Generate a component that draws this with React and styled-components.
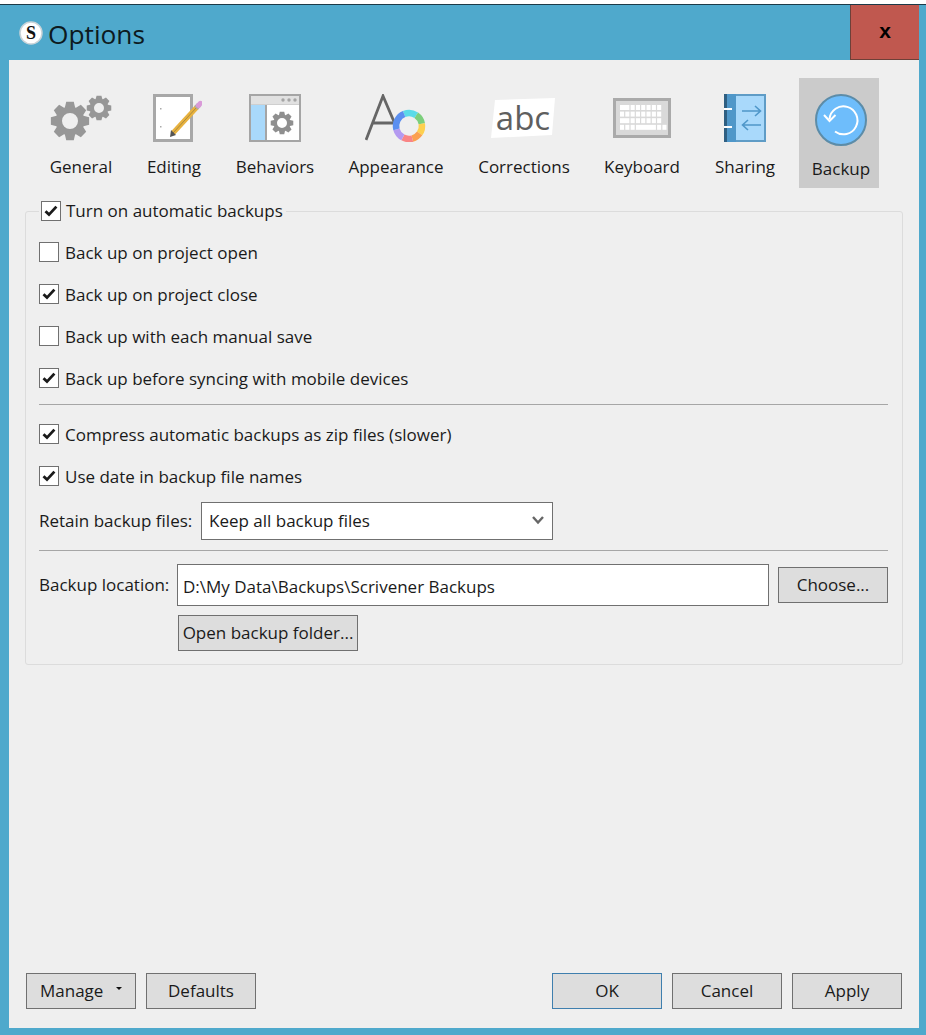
import styled, { createGlobalStyle } from "styled-components";

const GlobalStyle = createGlobalStyle`
  html, body {
    margin: 0;
    padding: 0;
    background: #ffffff;
  }
  body {
    font-family: "Open Sans", "Noto Sans", sans-serif;
    font-size: 17px;
    color: #1a1a1a;
  }
`;

const Frame = styled.div`
  box-sizing: border-box;
  width: 926px;
  height: 1031px;
  margin-top: 4px;
  padding: 0 7px 7px 9px;
  background: #4fa9cc;
  border-top: 1px solid #1c3a48;
  display: flex;
  flex-direction: column;
`;

const TitleBar = styled.div`
  height: 55px;
  flex: none;
  display: flex;
  align-items: center;
  justify-content: space-between;
`;

const TitleGroup = styled.div`
  display: flex;
  align-items: center;
  gap: 5px;
  padding-left: 10px;
`;

const Title = styled.div`
  font-size: 26.3px;
  color: #0d1a20;
  line-height: 55px;
  padding-top: 3px;
`;

const CloseButton = styled.div`
  box-sizing: border-box;
  width: 69px;
  height: 55px;
  background: #c0584f;
  border-left: 1px solid #6e4038;
  border-bottom: 1px solid #6e4038;
  display: flex;
  align-items: center;
  justify-content: center;
  padding-bottom: 2px;
  font-family: "Liberation Sans", sans-serif;
  font-weight: 700;
  font-size: 21px;
  color: #000000;
`;

const Content = styled.div`
  flex: 1;
  background: #efefef;
  display: flex;
  flex-direction: column;
  padding: 18px 16px 19px;
`;

const Tabs = styled.div`
  display: flex;
  padding-left: 8px;
`;

const Tab = styled.div`
  box-sizing: border-box;
  height: 110px;
  width: ${(p) => p.$width}px;
  margin-left: ${(p) => (p.$selected ? 6 : 0)}px;
  flex: none;
  display: flex;
  flex-direction: column;
  align-items: center;
  padding-top: 16px;
  padding-left: ${(p) => (p.$selected ? 4 : 0)}px;
  background: ${(p) => (p.$selected ? "#cbcbcb" : "transparent")};
`;

const TabIcon = styled.svg`
  display: block;
  flex: none;
`;

const TabLabel = styled.div`
  margin-top: ${(p) => (p.$selected ? 11 : 13)}px;
  line-height: 24px;
  white-space: nowrap;
`;

const Group = styled.fieldset`
  margin: 13px 0 0;
  padding: 0 14px 13px 13px;
  min-width: 0;
  border: 1px solid #dcdcdc;
  border-radius: 3px;
`;

const GroupLegend = styled.legend`
  padding: 0 3px 0 2px;
  display: flex;
  align-items: center;
  gap: 5px;
  height: 20px;
`;

const LegendText = styled.span`
  padding-bottom: 2px;
`;

const CheckList = styled.div`
  display: flex;
  flex-direction: column;
  gap: 22px;
  margin-top: ${(p) => p.$top}px;
`;

const CheckRow = styled.div`
  display: flex;
  align-items: center;
  gap: 6px;
  height: 20px;
  white-space: nowrap;
`;

const Box = styled.span`
  box-sizing: border-box;
  width: 20px;
  height: 20px;
  flex: none;
  background: #ffffff;
  border: 1px solid #707070;
  display: flex;
  align-items: center;
  justify-content: center;
`;

const Divider = styled.div`
  height: 1px;
  background: #a6a6a6;
  margin-top: ${(p) => p.$top}px;
`;

const FormRow = styled.div`
  display: flex;
  align-items: center;
  margin-top: ${(p) => p.$top}px;
`;

const FormLabel = styled.div`
  width: ${(p) => p.$width}px;
  flex: none;
  padding-bottom: 2px;
  white-space: nowrap;
`;

const Dropdown = styled.div`
  box-sizing: border-box;
  width: 352px;
  height: 38px;
  background: #ffffff;
  border: 1px solid #707070;
  display: flex;
  align-items: center;
  justify-content: space-between;
  padding: 0 7px 2px 7px;
`;

const PathField = styled.div`
  box-sizing: border-box;
  flex: 1;
  height: 42px;
  margin-right: 9px;
  background: #ffffff;
  border: 1px solid #707070;
  display: flex;
  align-items: center;
  padding: 2px 0 0 5px;
`;

const Button = styled.div`
  box-sizing: border-box;
  width: ${(p) => p.$width || 110}px;
  height: 36px;
  flex: none;
  background: #dddddd;
  border: 1px solid ${(p) => (p.$primary ? "#3f7fae" : "#707070")};
  display: flex;
  align-items: center;
  justify-content: ${(p) => (p.$menu ? "flex-start" : "center")};
  padding-left: ${(p) => (p.$menu ? 13 : 0)}px;
  padding-bottom: 2px;
  white-space: nowrap;
`;

const MenuCaret = styled.span`
  margin-left: 13px;
  margin-bottom: 3px;
  width: 0;
  height: 0;
  border-left: 3px solid transparent;
  border-right: 3px solid transparent;
  border-top: 3px solid #111111;
`;

const OpenButton = styled(Button)`
  margin-top: 9px;
  margin-left: 139px;
`;

const Footer = styled.div`
  margin-top: auto;
  padding: 0 1px;
  display: flex;
  justify-content: space-between;
`;

const ButtonGroup = styled.div`
  display: flex;
  gap: 10px;
`;

// builds a cog outline with a round hole, used by the General and Behaviors icons
const gearPath = (cx, cy, outer, inner, hole, teeth) => {
  const pts = [];
  const step = (Math.PI * 2) / teeth;
  for (let i = 0; i < teeth; i++) {
    const a = i * step - Math.PI / 2;
    [
      [-0.5, inner],
      [-0.27, outer],
      [0.27, outer],
      [0.5, inner],
    ].forEach(([t, r]) => {
      const b = a + t * step * 0.92;
      pts.push(`${(cx + Math.cos(b) * r).toFixed(2)} ${(cy + Math.sin(b) * r).toFixed(2)}`);
    });
  }
  return `M${pts.join("L")}Z M${cx - hole} ${cy}a${hole} ${hole} 0 1 0 ${hole * 2} 0a${hole} ${hole} 0 1 0 ${-hole * 2} 0Z`;
};

const Logo = () => (
  <svg width="24" height="24" viewBox="0 0 24 24">
    <circle cx="12" cy="12" r="11" fill="#ffffff" stroke="#c9d3d8" strokeWidth="1.5" />
    <text x="12" y="18" textAnchor="middle" fontFamily="Liberation Serif, serif" fontWeight="700" fontSize="18" fill="#111">
      S
    </text>
  </svg>
);

const CheckMark = () => (
  <svg width="14" height="12" viewBox="0 0 14 12">
    <path d="M1.5 6.2 5 9.6 12.4 1.6" fill="none" stroke="#1a1a1a" strokeWidth="2.8" />
  </svg>
);

const GeneralIcon = () => (
  <TabIcon width="64" height="48" viewBox="0 0 64 48">
    <path fillRule="evenodd" fill="#979797" d={gearPath(21, 27, 19.5, 14.5, 8, 8)} />
    <path fillRule="evenodd" fill="#979797" d={gearPath(50, 14, 12.5, 9.5, 5, 8)} />
  </TabIcon>
);

const EditingIcon = () => (
  <TabIcon width="56" height="48" viewBox="-7 0 56 48">
    <rect x="1.5" y="1.5" width="37" height="45" fill="#ffffff" stroke="#a8a8a8" strokeWidth="3" />
    <rect x="7" y="14" width="1.5" height="1.5" fill="#aaa" />
    <rect x="7" y="32" width="1.5" height="1.5" fill="#aaa" />
    <path d="M20 39 44 13" stroke="#e8b23f" strokeWidth="5" fill="none" />
    <path d="M20 39 44 13" stroke="#8f7a3c" strokeWidth="0.7" fill="none" />
    <path d="M43 14 46 10.8" stroke="#aaaaaa" strokeWidth="5" fill="none" />
    <path d="M45.5 11.5 47.5 9.3" stroke="#d99ad8" strokeWidth="5" strokeLinecap="round" fill="none" />
    <path d="M17 43 18 36 23 41Z" fill="#555555" />
  </TabIcon>
);

const BehaviorsIcon = () => (
  <TabIcon width="52" height="48" viewBox="0 0 52 48">
    <rect x="1" y="1" width="50" height="46" fill="#ffffff" stroke="#a5a5a5" strokeWidth="2" />
    <rect x="2" y="2" width="48" height="9" fill="#e1e1e1" />
    <rect x="2" y="11" width="14" height="35" fill="#a9d9fb" />
    <rect x="16" y="11" width="2" height="35" fill="#a5a5a5" />
    <rect x="2" y="10" width="48" height="1" fill="#cfcfcf" />
    <circle cx="34" cy="6" r="1.7" fill="#a5a5a5" />
    <circle cx="40" cy="6" r="1.7" fill="#a5a5a5" />
    <circle cx="46" cy="6" r="1.7" fill="#a5a5a5" />
    <path fillRule="evenodd" fill="#8f8f8f" d={gearPath(33, 29, 11.5, 8.5, 5, 8)} />
  </TabIcon>
);

const ringSegments = [
  ["#5adbe8", 248, 304],
  ["#7ccf7c", 304, 350],
  ["#fdd04f", 350, 35],
  ["#fba04f", 35, 75],
  ["#f98585", 75, 118],
  ["#b49af0", 118, 165],
  ["#5b8ff0", 165, 248],
];

const ringArc = (cx, cy, r, from, to) => {
  const rad = (d) => (d * Math.PI) / 180;
  const end = to < from ? to + 360 : to;
  const x1 = cx + r * Math.cos(rad(from));
  const y1 = cy + r * Math.sin(rad(from));
  const x2 = cx + r * Math.cos(rad(end));
  const y2 = cy + r * Math.sin(rad(end));
  return `M${x1} ${y1}A${r} ${r} 0 0 1 ${x2} ${y2}`;
};

const AppearanceIcon = () => (
  <TabIcon width="62" height="48" viewBox="0 0 62 48">
    <path d="M1 46 18 2 30 30M7 29H30" fill="none" stroke="#666666" strokeWidth="2.8" />
    {ringSegments.map(([color, from, to]) => (
      <path key={color} d={ringArc(44, 32, 13, from, to)} fill="none" stroke={color} strokeWidth="6.5" />
    ))}
  </TabIcon>
);

const CorrectionsIcon = () => (
  <TabIcon width="66" height="48" viewBox="0 0 66 48">
    <path d="M4 6 64 4 61 41 0 44Z" fill="#ffffff" />
    <text x="32" y="36" textAnchor="middle" fontFamily="Open Sans, sans-serif" fontSize="33" fill="#5f5f5f">
      abc
    </text>
  </TabIcon>
);

const keyRows = [
  [2, 1, 1, 1, 1, 1, 1],
  [1, 1, 1, 1, 1, 1, 1, 1],
  [2, 1, 1, 1, 1, 1, 1],
  [1, 1, 1, 4, 1, 1],
];

const KeyboardIcon = () => (
  <TabIcon width="58" height="48" viewBox="0 0 58 48">
    <rect x="1.500" y="5.500" width="55" height="37" fill="#d9d9d9" stroke="#aaaaaa" strokeWidth="3" />
    {keyRows.map((row, y) => {
      let col = 0;
      return row.map((span, i) => {
        const x = col;
        col += span;
        return <rect key={`${y}-${i}`} x={7 + x * 5.3} y={11 + y * 6.6} width={span * 5.3 - 1.2} height="5" fill="#ffffff" />;
      });
    })}
  </TabIcon>
);

const SharingIcon = () => (
  <TabIcon width="42" height="48" viewBox="0 0 42 48">
    <rect x="1" y="1" width="40" height="46" fill="#a9d9fb" stroke="#5f9cc6" strokeWidth="2" />
    <rect x="0" y="0" width="12" height="48" fill="#4f97c9" />
    <rect x="0" y="0" width="3" height="48" fill="#2f5f82" />
    <rect x="0" y="14" width="8" height="2" fill="#ffffff" />
    <rect x="0" y="32" width="8" height="2" fill="#ffffff" />
    <path d="M18 17H36M31 12 36.500 17 31 22" fill="none" stroke="#4f97c9" strokeWidth="1.600" />
    <path d="M37 31H19M24 26 18.500 31 24 36" fill="none" stroke="#4f97c9" strokeWidth="1.600" />
  </TabIcon>
);

const BackupIcon = () => (
  <TabIcon width="52" height="52" viewBox="0 0 52 52">
    <circle cx="26" cy="26" r="25" fill="#6ebdfb" stroke="#5c8ca8" strokeWidth="2" />
    <path d="M14.500 25A14 14 0 1 1 20 37.500" fill="none" stroke="#ffffff" strokeWidth="2" />
    <path d="M9 21 14.500 27 20.500 21" fill="none" stroke="#ffffff" strokeWidth="2" />
  </TabIcon>
);

const tabs = [
  { label: "General", width: 96, Icon: GeneralIcon },
  { label: "Editing", width: 90, Icon: EditingIcon },
  { label: "Behaviors", width: 112, Icon: BehaviorsIcon },
  { label: "Appearance", width: 130, Icon: AppearanceIcon },
  { label: "Corrections", width: 126, Icon: CorrectionsIcon },
  { label: "Keyboard", width: 110, Icon: KeyboardIcon },
  { label: "Sharing", width: 96, Icon: SharingIcon },
  { label: "Backup", width: 80, Icon: BackupIcon, selected: true },
];

const Check = ({ checked, label }) => (
  <CheckRow>
    <Box>{checked && <CheckMark />}</Box>
    {label}
  </CheckRow>
);

const App = () => {
  return (
    <>
      <GlobalStyle />
      <Frame>
        <TitleBar>
          <TitleGroup>
            <Logo />
            <Title>Options</Title>
          </TitleGroup>
          <CloseButton>x</CloseButton>
        </TitleBar>
        <Content>
          <Tabs>
            {tabs.map(({ label, width, Icon, selected }) => (
              <Tab key={label} $width={width} $selected={selected}>
                <Icon />
                <TabLabel $selected={selected}>{label}</TabLabel>
              </Tab>
            ))}
          </Tabs>
          <Group>
            <GroupLegend>
              <Box>
                <CheckMark />
              </Box>
              <LegendText>Turn on automatic backups</LegendText>
            </GroupLegend>
            <CheckList $top={21}>
              <Check label="Back up on project open" />
              <Check checked label="Back up on project close" />
              <Check label="Back up with each manual save" />
              <Check checked label="Back up before syncing with mobile devices" />
            </CheckList>
            <Divider $top={16} />
            <CheckList $top={19}>
              <Check checked label="Compress automatic backups as zip files (slower)" />
              <Check checked label="Use date in backup file names" />
            </CheckList>
            <FormRow $top={16}>
              <FormLabel $width={162}>Retain backup files:</FormLabel>
              <Dropdown>
                Keep all backup files
                <svg width="14" height="10" viewBox="0 0 14 10">
                  <path d="M2 2 7 7.500 12 2" fill="none" stroke="#666666" strokeWidth="2.4" />
                </svg>
              </Dropdown>
            </FormRow>
            <Divider $top={10} />
            <FormRow $top={13}>
              <FormLabel $width={138}>Backup location:</FormLabel>
              <PathField>D:\My Data\Backups\Scrivener Backups</PathField>
              <Button>Choose...</Button>
            </FormRow>
            <OpenButton $width={180}>Open backup folder...</OpenButton>
          </Group>
          <Footer>
            <ButtonGroup>
              <Button $menu>
                Manage
                <MenuCaret />
              </Button>
              <Button>Defaults</Button>
            </ButtonGroup>
            <ButtonGroup>
              <Button $primary>OK</Button>
              <Button>Cancel</Button>
              <Button>Apply</Button>
            </ButtonGroup>
          </Footer>
        </Content>
      </Frame>
    </>
  );
};

export default App;
